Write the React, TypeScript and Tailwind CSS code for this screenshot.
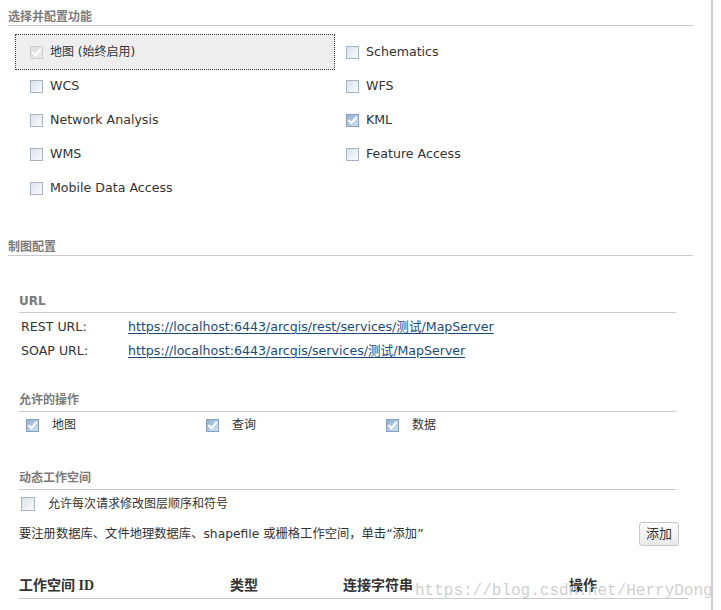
import React from "react";

type State = "off" | "on" | "disabled";

function Box({ state, size = 13 }: { state: State; size?: number }) {
  const sz = size === 14 ? "w-[14px] h-[14px]" : "w-[13px] h-[13px]";
  if (state === "off") {
    return (
      <span
        className={`${sz} inline-block shrink-0 border border-[#a9b3bf] bg-linear-to-br from-[#dbe3eb] to-[#fafbfc]`}
      />
    );
  }
  const cls =
    state === "on"
      ? "border-[#87a0ba] bg-linear-to-br from-[#8eb0d4] to-[#d3e3f2]"
      : "border-[#cfcfcf] bg-linear-to-br from-[#dcdcdc] to-[#ececec]";
  return (
    <span className={`${sz} relative inline-flex shrink-0 items-center justify-center border ${cls}`}>
      <svg width="11" height="11" viewBox="0 0 11 11">
        <path d="M2 5.8 L4.4 8.2 L9.2 2.6" fill="none" stroke="#ffffff" strokeWidth="2" strokeLinecap="square" />
      </svg>
    </span>
  );
}

function SectionHeader({ children }: { children: React.ReactNode }) {
  return (
    <div className="h-[26px] pt-[9px] leading-4 border-b border-[#cbcbcb] text-[12px] font-bold text-[#7a7a7a]">
      {children}
    </div>
  );
}

function SubHeader({ children, mt }: { children: React.ReactNode; mt: string }) {
  return (
    <div className={`${mt} leading-4 pt-[1px] pb-[3px] border-b border-[#cbcbcb] text-[12px] font-bold text-[#7a7a7a]`}>
      {children}
    </div>
  );
}

function Cell({ state, label, left }: { state: State; label: string; left?: boolean }) {
  return (
    <div className={`flex items-center gap-[7px] ${left ? "pl-[14px]" : "pl-3"}`}>
      <Box state={state} />
      <span className="leading-4">{label}</span>
    </div>
  );
}

export default function App() {
  return (
    <div className="relative w-[721px] h-[610px] overflow-hidden bg-white text-[12.6px] text-[#333] font-['DejaVu_Sans','Noto_Sans_CJK_SC',sans-serif]">
      <div className="w-[713px] h-full border-r-2 border-[#d2d2d2] pl-2">
        <div className="w-[685px]">
          <SectionHeader>选择并配置功能</SectionHeader>
          <div className="mt-[9px] ml-2 grid grid-cols-[318px_1fr] auto-rows-[34px]">
            <div className="flex items-center gap-[7px] pl-[14px] bg-[#eeeeee] outline outline-1 outline-dotted outline-[#333]">
              <Box state="disabled" />
              <span className="leading-4 text-[12px]">地图 (始终启用)</span>
            </div>
            <Cell state="off" label="Schematics" />
            <Cell state="off" label="WCS" left />
            <Cell state="off" label="WFS" />
            <Cell state="off" label="Network Analysis" left />
            <Cell state="on" label="KML" />
            <Cell state="off" label="WMS" left />
            <Cell state="off" label="Feature Access" />
            <Cell state="off" label="Mobile Data Access" left />
            <div />
          </div>
          <div className="mt-[25px]">
            <SectionHeader>制图配置</SectionHeader>
          </div>
        </div>

        <div className="pl-[11px]">
          <div className="w-[657px]">
            <SubHeader mt="mt-[36px]">URL</SubHeader>
            <div className="mt-[2px]">
              <div className="flex h-[24px] items-center pl-[2px]">
                <span className="w-[107px] leading-4">REST URL:</span>
                <a className="leading-4 text-[#1b4a7e] underline underline-offset-2">
                  https://localhost:6443/arcgis/rest/services/测试/MapServer
                </a>
              </div>
              <div className="flex h-[24px] items-center pl-[2px]">
                <span className="w-[107px] leading-4">SOAP URL:</span>
                <a className="leading-4 text-[#1b4a7e] underline underline-offset-2">
                  https://localhost:6443/arcgis/services/测试/MapServer
                </a>
              </div>
            </div>

            <SubHeader mt="mt-[28px]">允许的操作</SubHeader>
            <div className="flex h-[25px] items-center pt-[1px]">
              {["地图", "查询", "数据"].map((t) => (
                <div key={t} className="flex w-[180px] items-center gap-[13px] pl-[7px]">
                  <Box state="on" />
                  <span className="leading-4 text-[12px]">{t}</span>
                </div>
              ))}
            </div>

            <SubHeader mt="mt-[32px]">动态工作空间</SubHeader>
            <div className="flex h-[27px] items-center gap-[13px] pl-[2px] pt-[1px]">
              <Box state="off" size={14} />
              <span className="leading-4 text-[12px]">允许每次请求修改图层顺序和符号</span>
            </div>
          </div>
          <div className="flex h-[33px] w-[660px] items-center justify-between">
            <span className="leading-4 text-[12.3px]">要注册数据库、文件地理数据库、shapefile 或栅格工作空间，单击“添加”</span>
            <button className="h-[24px] w-[40px] rounded-[3px] border border-[#c6c6c6] bg-linear-to-b from-[#fdfdfd] to-[#e9e9e9] text-[13px] leading-4 text-[#333]">
              添加
            </button>
          </div>
          <div className="mt-[27px] flex w-[669px] border-b border-[#cbcbcb] pb-[3px] text-[14px] font-bold leading-[18px] text-[#333] font-['Liberation_Serif','Noto_Sans_CJK_SC',serif]">
            <span className="w-[211px]">工作空间 ID</span>
            <span className="w-[113px]">类型</span>
            <span className="w-[226px]">连接字符串</span>
            <span>操作</span>
          </div>
        </div>
      </div>
      <div className="absolute left-[415px] top-[581px] text-[16px] leading-5 text-[#cfcfcf] font-['Liberation_Mono',monospace] pointer-events-none">
        https://blog.csdn.net/HerryDong
      </div>
    </div>
  );
}
